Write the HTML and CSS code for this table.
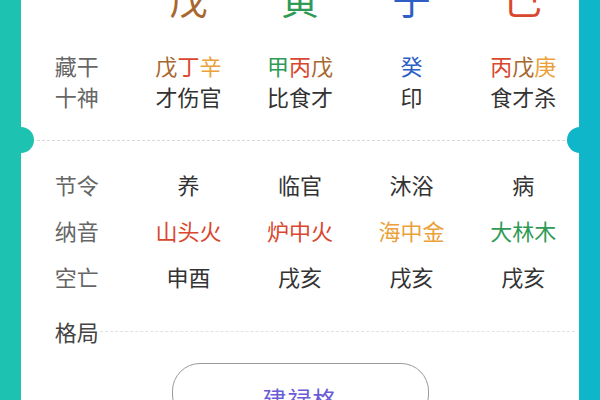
FILE: index.html
```html
<!DOCTYPE html>
<html lang="zh">
<head>
<meta charset="utf-8">
<link rel="stylesheet" href="styles.css">
</head>
<body>
<div class="card">
  <div class="notch notch-left"></div>
  <div class="notch notch-right"></div>
  <div class="grid stems">
    <span></span>
    <span class="c-brown">戊</span>
    <span class="c-green">寅</span>
    <span class="c-blue">子</span>
    <span class="c-red">巳</span>
  </div>
  <div class="grid rows-top">
    <span class="label">藏干</span>
    <span><i class="c-brown">戊</i><i class="c-red">丁</i><i class="c-orange">辛</i></span>
    <span><i class="c-green">甲</i><i class="c-red">丙</i><i class="c-brown">戊</i></span>
    <span><i class="c-blue">癸</i></span>
    <span><i class="c-red">丙</i><i class="c-brown">戊</i><i class="c-orange">庚</i></span>
    <span class="label">十神</span>
    <span>才伤官</span>
    <span>比食才</span>
    <span>印</span>
    <span>食才杀</span>
  </div>
  <div class="divider"></div>
  <div class="grid rows-mid">
    <span class="label">节令</span>
    <span>养</span>
    <span>临官</span>
    <span>沐浴</span>
    <span>病</span>
    <span class="label">纳音</span>
    <span class="c-red">山头火</span>
    <span class="c-red">炉中火</span>
    <span class="c-orange">海中金</span>
    <span class="c-green">大林木</span>
    <span class="label">空亡</span>
    <span>申酉</span>
    <span>戌亥</span>
    <span>戌亥</span>
    <span>戌亥</span>
  </div>
  <div class="geju">
    <span class="geju-label">格局</span>
    <span class="geju-line"></span>
  </div>
  <div class="btn-wrap">
    <div class="btn">建禄格</div>
  </div>
</div>
</body>
</html>
```
FILE: styles.css
```css
html, body {
  margin: 0;
  padding: 0;
}
body {
  width: 600px;
  height: 400px;
  overflow: hidden;
  background: linear-gradient(90deg, #1ec2b0 0%, #17bdbc 50%, #0fb6ca 100%);
  font-family: "Noto Sans CJK SC", "Noto Sans", sans-serif;
}
.card {
  position: relative;
  display: flow-root;
  margin: 0 21px;
  height: 420px;
  background: #fff;
}
.notch {
  position: absolute;
  top: 127px;
  width: 26px;
  height: 26px;
  border-radius: 50%;
}
.notch-left {
  left: -13px;
  background: #1ec2b0;
}
.notch-right {
  right: -14px;
  background: #0fb6ca;
}
.grid {
  display: grid;
  grid-template-columns: repeat(5, 1fr);
  text-align: center;
  color: #333;
  font-size: 22px;
}
.grid i {
  font-style: normal;
}
.stems {
  font-size: 38px;
  line-height: 38px;
  height: 38px;
  margin-top: -21px;
}
.rows-top {
  margin-top: 33px;
  grid-auto-rows: 31px;
  line-height: 31px;
}
.divider {
  margin: 28px 14px 0 16px;
  border-top: 1px dashed #d8d8d8;
}
.rows-mid {
  margin-top: 20px;
  grid-auto-rows: 46px;
  line-height: 46px;
}
.label {
  color: #666;
}
.geju {
  display: flex;
  align-items: center;
  margin-top: 9px;
  height: 46px;
  font-size: 22px;
  color: #444;
}
.geju-label {
  width: 111.6px;
  text-align: center;
  flex: none;
}
.geju-line {
  flex: 1;
  margin-left: -33px;
  margin-right: 4px;
  border-top: 1px dashed #e2e2e2;
}
.btn-wrap {
  display: flex;
  justify-content: center;
  margin-top: 9px;
}
.btn {
  width: 257px;
  height: 60px;
  box-sizing: border-box;
  border: 1px solid #9a9a9a;
  border-radius: 28px;
  text-align: center;
  padding-top: 20px;
  font-size: 24px;
  line-height: 30px;
  color: #6b5bd6;
  letter-spacing: 1px;
}
.c-brown { color: #a8672e; }
.c-red { color: #d9472f; }
.c-orange { color: #eba13a; }
.c-green { color: #2f9a55; }
.c-blue { color: #2d5ec6; }
```
